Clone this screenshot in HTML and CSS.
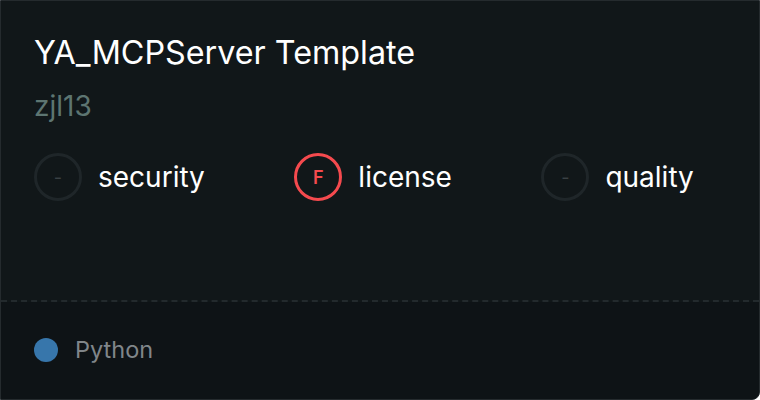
FILE: index.html
```html
<!DOCTYPE html>
<html>
<head>
<meta charset="utf-8">
<link rel="stylesheet" href="styles.css">
</head>
<body>
<div class="card">
  <div class="top">
    <div class="title">YA_MCPServer Template</div>
    <div class="author">zjl13</div>
    <div class="scores">
      <div class="score"><span class="ring ring-none">-</span><span class="label">security</span></div>
      <div class="score"><span class="ring ring-f">F</span><span class="label">license</span></div>
      <div class="score"><span class="ring ring-none">-</span><span class="label">quality</span></div>
    </div>
  </div>
  <div class="bottom">
    <span class="dot"></span><span class="lang">Python</span>
  </div>
</div>
</body>
</html>
```
FILE: styles.css
```css
html, body { margin: 0; padding: 0; background: #ffffff; }
body { width: 760px; height: 400px; overflow: hidden; font-family: Inter, "Noto Sans", sans-serif; }
.card {
  width: 760px; height: 400px; box-sizing: border-box;
  border: 1px solid #252b2e; border-radius: 0 0 8px 0;
  background: #111719; overflow: hidden;
  display: flex; flex-direction: column;
}
.top { height: 301px; box-sizing: border-box; padding: 32px 33px 0; border-bottom: 2px dashed #232a2d; }
.title { color: #ffffff; font-size: 32.3px; line-height: 40px; }
.author { color: #5d7571; font-size: 28px; line-height: 34px; margin-top: 16px; }
.scores { display: flex; gap: 89.5px; margin-top: 30px; align-items: center; }
.score { display: flex; align-items: center; gap: 16px; }
.ring {
  width: 48px; height: 48px; box-sizing: border-box; border-radius: 50%;
  display: flex; align-items: center; justify-content: center;
  font-size: 18px; font-weight: 600;
}
.ring-none { border: 3px solid #1f2629; color: #3a4144; font-weight: 400; }
.ring-f { border: 3px solid #f54a4e; color: #f54a4e; }
.label { color: #ffffff; font-size: 28px; line-height: 34px; }
.bottom { flex: 1; background: #0e1316; display: flex; align-items: center; padding: 0 33px; gap: 17px; padding-bottom: 2px; }
.dot { width: 24px; height: 24px; border-radius: 50%; background: #3776ab; }
.lang { color: #80868a; font-size: 23.5px; }
```
